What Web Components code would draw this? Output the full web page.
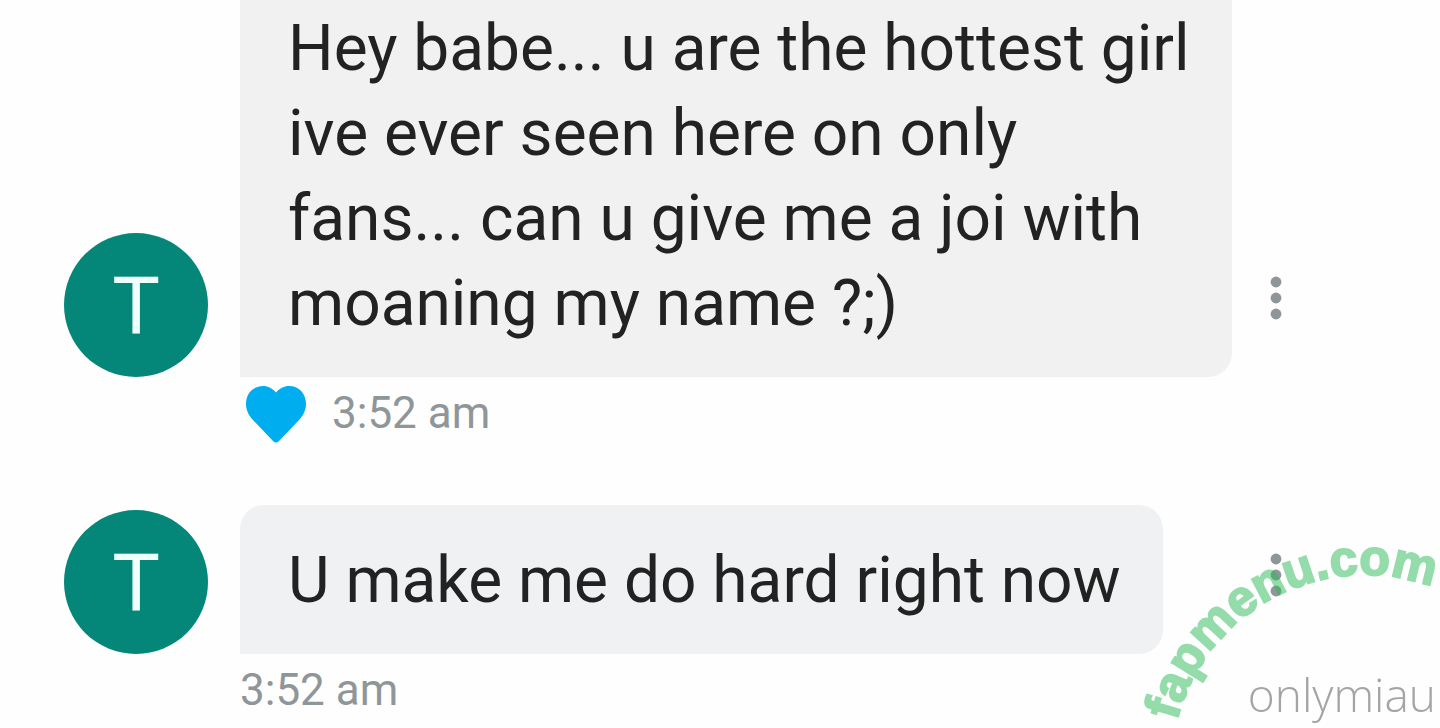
<!DOCTYPE html>
<html lang="en">
<head>
<meta charset="utf-8">
<title>Messages</title>
<style>
  html, body { margin: 0; background: #fefefe; }
  body { font-family: Roboto, "Liberation Sans", sans-serif; color: #222; overflow: hidden; }
</style>
</head>
<body>
<chat-thread>
  <chat-message initial="T" time="3:52 am" liked continued>Hey babe... u are the hottest girl ive ever seen here on only fans... can u give me a joi with moaning my name ?;)</chat-message>
  <chat-message initial="T" time="3:52 am">U make me do hard right now</chat-message>
</chat-thread>
<page-watermark site="fapmenu.com">onlymiau</page-watermark>
<script>
class ChatThread extends HTMLElement {
  constructor() {
    super();
    this.attachShadow({ mode: "open" }).innerHTML = `
      <style>
        :host { display: block; }
        /* The thread is scrolled a little past the top of its first bubble. */
        main { display: flex; flex-direction: column; gap: 56px; margin-top: -27px; padding: 0 120px 0 64px; }
      </style>
      <main><slot></slot></main>`;
  }
}

class UserAvatar extends HTMLElement {
  constructor() {
    super();
    this.attachShadow({ mode: "open" }).innerHTML = `
      <style>
        :host { display: flex; align-items: center; justify-content: center; width: 144px; height: 144px;
          border-radius: 50%; background: #048778; color: #effffb; font-size: 80px; line-height: 84px; }
        span { padding-top: 4px; }
      </style>
      <span><slot></slot></span>`;
  }
}

class MoreButton extends HTMLElement {
  constructor() {
    super();
    this.attachShadow({ mode: "open" }).innerHTML = `
      <style>
        :host { display: block; }
        button { display: flex; align-items: center; justify-content: center; width: 88px; height: 88px;
          margin: 0; padding: 0; border: 0; background: none; color: #8f9699; cursor: pointer; }
      </style>
      <button type="button" aria-label="More options">
        <svg width="12" height="44" viewBox="0 0 12 44" fill="currentColor" aria-hidden="true">
          <circle cx="6" cy="6" r="5.4"/><circle cx="6" cy="22" r="5.4"/><circle cx="6" cy="38" r="5.4"/>
        </svg>
      </button>`;
  }
}

class ChatMessage extends HTMLElement {
  connectedCallback() {
    if (this.shadowRoot) return;
    const heart = `
      <button type="button" aria-label="Unlike" aria-pressed="true">
        <svg width="60" height="58" viewBox="0 0 60 58" aria-hidden="true">
          <path fill="#00aeef" d="M30 7.500C26.500 3.500 22 1 17 1C7 1 0 8.500 0 19C0 25 2.500 30 6.500 34.500L27 56Q30 59 33 56L53.500 34.500C57.500 30 60 25 60 19C60 8.500 53 1 43 1C38 1 33.500 3.500 30 7.500Z"/>
        </svg>
      </button>`;
    this.attachShadow({ mode: "open" }).innerHTML = `
      <style>
        :host { display: block; }
        article { display: grid; grid-template-columns: 144px 1fr 56px; column-gap: 32px; align-items: end; }
        .bubble { justify-self: start; margin: 0; padding: 33px 42px 31px 48px; border-radius: 24px 24px 24px 0;
          background: #f0f1f2; font-size: 64px; line-height: 85px; }
        :host([continued]) .bubble { border-top-left-radius: 0; background: #f1f1f1; }
        more-button { margin: 0 0 35px -32px; }
        footer { grid-column: 2; display: flex; align-items: center; gap: 26px; height: 72px;
          color: #8f9699; font-size: 44px; line-height: 72px; }
        button { display: flex; margin: 0 0 0 6px; padding: 2px 0 0; border: 0; background: none; cursor: pointer; }
      </style>
      <article>
        <user-avatar>${this.getAttribute("initial")}</user-avatar>
        <p class="bubble"><slot></slot></p>
        <more-button></more-button>
        <footer>${this.hasAttribute("liked") ? heart : ""}<time>${this.getAttribute("time")}</time></footer>
      </article>`;
  }
}

class PageWatermark extends HTMLElement {
  connectedCallback() {
    if (this.shadowRoot) return;
    this.attachShadow({ mode: "open" }).innerHTML = `
      <style>
        :host { position: fixed; right: 0; bottom: 0; width: 310px; height: 208px; pointer-events: none;
          display: flex; align-items: flex-end; justify-content: flex-end; }
        svg { position: absolute; inset: 0; overflow: visible; opacity: .5; }
        text { font: bold 50px "Liberation Sans", Arial, sans-serif; fill: #2ab957; stroke: #2ab957; stroke-width: 2px; }
        span { padding: 0 4px 2px 0; font: 300 46px/64px "Open Sans", sans-serif; color: #a5a3a5; }
      </style>
      <svg width="310" height="208" viewBox="0 0 310 208">
        <defs><path id="arc" d="M47 201A194 194 0 0 1 429 248"/></defs>
        <text><textPath href="#arc">${this.getAttribute("site")}</textPath></text>
      </svg>
      <span><slot></slot></span>`;
  }
}

customElements.define("chat-thread", ChatThread);
customElements.define("user-avatar", UserAvatar);
customElements.define("more-button", MoreButton);
customElements.define("chat-message", ChatMessage);
customElements.define("page-watermark", PageWatermark);
</script>
</body>
</html>
